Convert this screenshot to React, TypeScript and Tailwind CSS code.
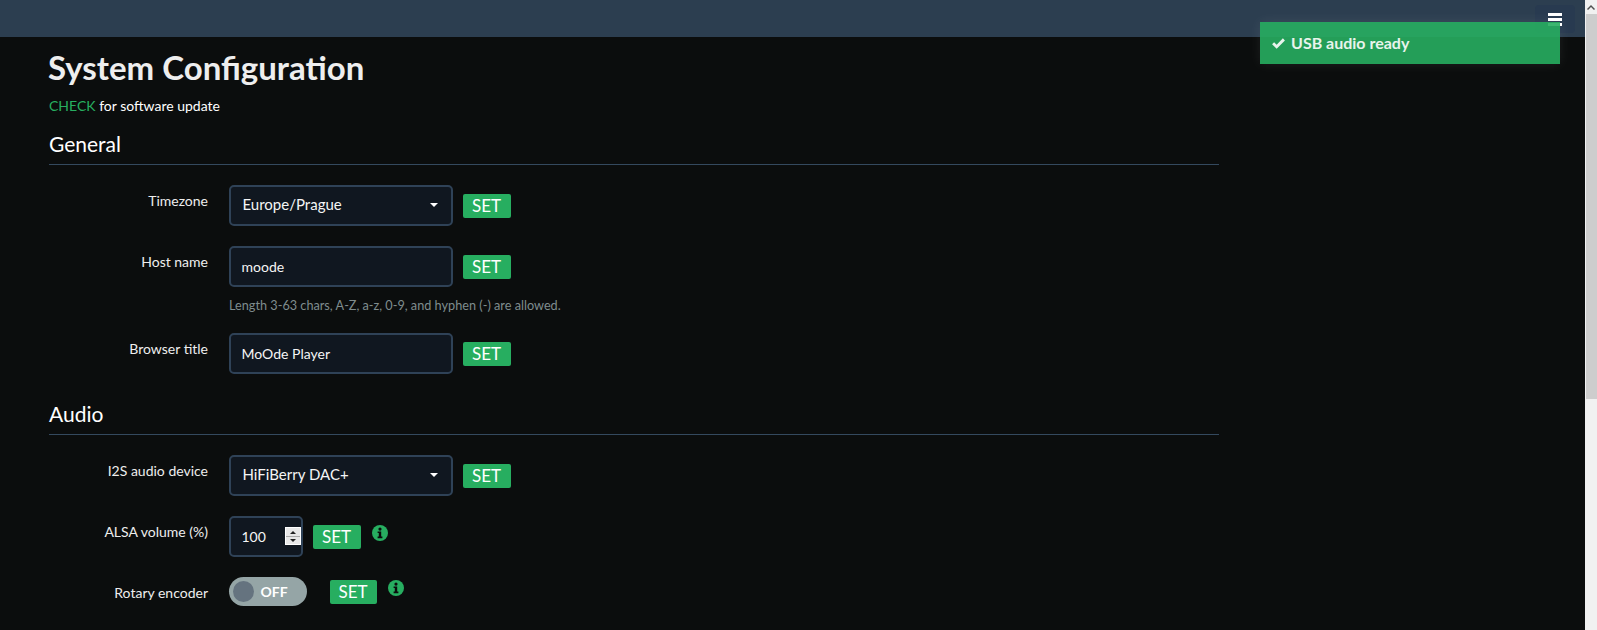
const Set = ({ className = "" }: { className?: string }) => (
  <button className={`h-6 w-12 shrink-0 rounded-[2px] bg-[#27ae60] text-[17px] leading-6 text-white text-center ${className}`}>SET</button>
);

const Info = ({ className = "" }: { className?: string }) => (
  <svg viewBox="0 0 16 16" className={`h-4 w-4 shrink-0 ${className}`}>
    <circle cx="8" cy="8" r="8" fill="#27ae60" />
    <circle cx="8" cy="4.1" r="1.6" fill="#0b0d0d" />
    <path d="M5.6 6.4h3.6v5.2h1.2v1.6H5.6v-1.6h1.2V8H5.6z" fill="#0b0d0d" />
  </svg>
);

const Caret = () => (
  <span className="ml-auto h-0 w-0 border-x-4 border-t-4 border-x-transparent border-t-white" />
);

const Row = ({ label, children, className = "" }: { label: string; children: React.ReactNode; className?: string }) => (
  <div className={`flex ${className}`}>
    <div className="w-[160px] shrink-0 pt-[6px] text-right text-[14px] leading-5 text-[#eeeeee]">{label}</div>
    <div className="ml-[20.5px] flex items-center">{children}</div>
  </div>
);

const boxCls =
  "flex h-[41px] shrink-0 items-center rounded-[5px] border-2 border-[#2f4257] bg-[#101720] text-[#f5f5f5]";

const Select = ({ value }: { value: string }) => (
  <div className={`${boxCls} w-[224px] pl-[12px] pr-[13px] pb-[2px] text-[15px]`}>
    {value}
    <Caret />
  </div>
);

const Input = ({ value }: { value: string }) => (
  <div className={`${boxCls} w-[224px] pl-[11px] text-[14px]`}>{value}</div>
);

export default function App() {
  return (
    <div className="flex h-[630px] w-full overflow-hidden bg-[#0b0d0d] font-['Lato',sans-serif]">
      <div className="relative min-w-0 flex-1">
        <header className="relative h-[37px] bg-[#2c3e50]">
          <button className="absolute left-[1535px] top-[5px] flex h-[28px] w-[40px] flex-col items-center justify-start gap-[2px] rounded-[4px] bg-[#283a50] pt-[8px]">
            <span className="block h-[3px] w-[14px] bg-white" />
            <span className="block h-[3px] w-[14px] bg-white" />
            <span className="block h-[3px] w-[14px] bg-white" />
          </button>
        </header>

        <div className="absolute left-[1260px] top-[22px] flex h-[42px] w-[300px] items-center bg-[#27ae60]/90 pl-[12px] text-[16px] font-bold text-[#e8f4ec] shadow-[0_0_12px_rgba(255,255,255,0.08)]">
          <svg viewBox="0 0 14 12" className="mr-[6px] h-[11px] w-[13px]" fill="#e8f4ec">
            <path d="M5 11.8 0 6.8l2.2-2.2L5 7.4 11.8.4 14 2.6z" />
          </svg>
          USB audio ready
        </div>

        <main className="pl-[48px]">
          <h1 className="mt-[10px] text-[33px] leading-[40px] font-bold text-[#eeeeee]">System Configuration</h1>
          <p className="ml-px mt-[9px] text-[14px] leading-5 text-white">
            <span className="text-[#27ae60]">CHECK</span> for software update
          </p>

          <h2 className="ml-px mt-[13px] h-[30px] w-[1170px] border-b border-[#34495e] text-[21px] leading-[30px] text-white box-content pb-[5px]">General</h2>

          <Row label="Timezone" className="mt-[20px]">
            <Select value="Europe/Prague" />
            <Set className="ml-[10px]" />
          </Row>
          <Row label="Host name" className="mt-[20px]">
            <Input value="moode" />
            <Set className="ml-[10px]" />
          </Row>
          <p className="ml-[181px] mt-[9px] text-[12.7px] leading-[18px] text-[#7f8c8d]">
            Length 3-63 chars, A-Z, a-z, 0-9, and hyphen (-) are allowed.
          </p>
          <Row label="Browser title" className="mt-[19px]">
            <Input value="MoOde Player" />
            <Set className="ml-[10px]" />
          </Row>

          <h2 className="ml-px mt-[25px] h-[30px] w-[1170px] border-b border-[#34495e] text-[21px] leading-[30px] text-white box-content pb-[5px]">Audio</h2>

          <Row label="I2S audio device" className="mt-[20px]">
            <Select value="HiFiBerry DAC+" />
            <Set className="ml-[10px]" />
          </Row>
          <Row label="ALSA volume (%)" className="mt-[20px]">
            <div className={`${boxCls} relative w-[74px] pl-[11px] text-[14px]`}>
              100
              <span className="absolute left-[54px] top-[9px] flex h-[18px] w-[16px] flex-col items-center justify-center gap-[2px] border border-white bg-[#e8e8e8]">
                <svg viewBox="0 0 6 3" className="h-[3px] w-[6px]"><path d="M3 0 6 3H0z" fill="#222" /></svg>
                <span className="h-[1px] w-full bg-[#aaaaaa]" />
                <svg viewBox="0 0 6 3" className="h-[3px] w-[6px]"><path d="M0 0h6L3 3z" fill="#222" /></svg>
              </span>
            </div>
            <Set className="ml-[10px]" />
            <Info className="ml-[11px] mb-[7px]" />
          </Row>
          <Row label="Rotary encoder" className="mt-[20px]">
            <div className="relative flex h-[29px] w-[78px] shrink-0 items-center rounded-full bg-[#95a5a6] pl-[32px] text-[14px] font-bold text-white">
              <span className="absolute left-[4px] top-[4px] h-[21px] w-[21px] rounded-full bg-[#65737f]" />
              OFF
            </div>
            <Set className="ml-[23px] w-[47px]" />
            <Info className="ml-[11px] mb-[7px]" />
          </Row>
        </main>
      </div>
      <div className="flex w-[12px] shrink-0 flex-col bg-[#f1f1f1]">
        <div className="flex h-[14px] items-center justify-center">
          <svg viewBox="0 0 8 5" className="h-[5px] w-[8px]"><path d="M4 0 8 4 7 5 4 2 1 5 0 4z" fill="#505050" /></svg>
        </div>
        <div className="ml-[1px] h-[385px] bg-[#cdcdcd]" />
      </div>
    </div>
  );
}
